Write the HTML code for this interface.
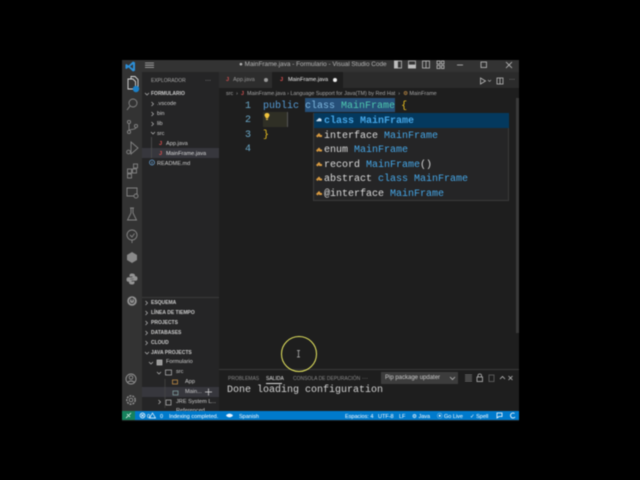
<!DOCTYPE html>
<html><head><meta charset="utf-8">
<style>
html,body{margin:0;padding:0;background:#000;width:640px;height:480px;overflow:hidden}
#w{position:absolute;left:0;top:0;width:640px;height:480px;filter:blur(.45px);font-family:"Liberation Sans",sans-serif;overflow:hidden}
.r{position:absolute}
.t{position:absolute;white-space:nowrap;line-height:10px;color:#ccc}
.m{font-family:"Liberation Mono",monospace;font-size:10px;line-height:14px;letter-spacing:0}
.h{font-size:5px;font-weight:bold;color:#ccc;letter-spacing:0}
.f{font-size:5.6px;color:#ccc}
.s{font-size:5.5px;line-height:9px;color:#fff;top:412.500px}
svg{position:absolute;overflow:visible}
.b{color:#45a6e6}
.c{color:#dcdcdc}
</style></head><body><div id="w">
<div class="r" style="left:122px;top:60px;width:397px;height:361px;background:#1e1e1e"></div>
<div class="r" style="left:122px;top:60px;width:397px;height:12px;background:#333"></div>
<div class="r" style="left:122px;top:72px;width:20px;height:339px;background:#333"></div>
<div class="r" style="left:142px;top:72px;width:77px;height:339px;background:#252526"></div>
<div class="r" style="left:219px;top:72px;width:300px;height:16px;background:#2b2b2b"></div>
<div class="r" style="left:219px;top:72px;width:53px;height:16px;background:#2d2d2d"></div>
<div class="r" style="left:272px;top:72px;width:71px;height:16px;background:#1e1e1e"></div>

<!-- title bar -->
<svg style="left:125px;top:61px" width="11" height="11" viewBox="0 0 11 11"><path d="M8 .5L3.5 4.6 1.4 3 .5 3.5V7.5L1.4 8 3.5 6.4 8 10.5 10 9.6V1.4Z" fill="#2c8fd8"/><path d="M8 3.3L5 5.5 8 7.7Z" fill="#333"/></svg>
<svg style="left:145px;top:62px" width="10" height="7"><path d="M0 1H9M0 3.2H9M0 5.4H9" stroke="#b5b5b5" stroke-width=".8"/></svg>
<div class="t" style="left:239px;top:60px;font-size:6.4px;color:#b5b5b5">● MainFrame.java - Formulario - Visual Studio Code</div>
<svg style="left:394px;top:60px" width="125" height="12" fill="none" stroke="#bdbdbd" stroke-width=".8">
<rect x="0.5" y="1" width="7" height="7"/><rect x="0.5" y="1" width="3" height="7" fill="#bdbdbd"/>
<rect x="14.5" y="1" width="7" height="7"/><rect x="14.5" y="5" width="7" height="3" fill="#bdbdbd"/>
<rect x="28.5" y="1" width="7" height="7"/><path d="M32 1V8"/>
<rect x="43" y="1" width="3" height="3"/><rect x="47.5" y="1" width="2.5" height="3"/><rect x="43" y="5.5" width="3" height="3"/><rect x="47.5" y="5.5" width="2.5" height="3"/>
<path d="M63 5H69"/><rect x="87" y="2" width="5.5" height="5.5"/><path d="M112 2L118 8M118 2L112 8"/>
</svg>

<!-- activity bar -->
<svg style="left:122px;top:72px" width="20" height="240" fill="none" stroke="#858585" stroke-width=".9">
<path d="M6 7H11L13.5 9.5V17H6Z M9 7V4.5H13L16 7.5V15H13.5" stroke="#d8d8d8"/>
<circle cx="14" cy="17" r="3.2" fill="#1b80c8" stroke="none"/>
<circle cx="11" cy="31" r="4"/><path d="M8 34L5 38"/>
<circle cx="7" cy="50" r="1.6"/><circle cx="7" cy="60" r="1.6"/><circle cx="14" cy="54" r="1.6"/><path d="M7 51.5V58.5M14 55.5C14 58 8 57 7 58.5"/>
<path d="M9 70L16 76 9 82Z"/><circle cx="6.5" cy="80" r="1.8"/>
<rect x="5.5" y="97" width="4" height="4"/><rect x="10.5" y="97" width="4" height="4"/><rect x="5.5" y="102" width="4" height="4"/><rect x="11.5" y="92" width="4" height="4"/>
<path d="M5 116H15V124H5Z"/><circle cx="14" cy="124" r="2" fill="#333"/>
<path d="M8 136H12M9 136V141L5.5 148H14.5L11 141V136"/>
<circle cx="10" cy="163" r="5"/><path d="M10 168V171M8 163L10 165 12.5 161.500"/>
<path d="M10 180L15 183V188L10 191 5 188V183Z" fill="#8a8a8a" stroke="none"/>
<path d="M10 201.500C8 201.500 7.500 202.500 7.500 203.500V204.500H10.500V205.200H6.500C5 205.200 4.500 206.200 4.500 207.500 4.500 208.800 5 209.800 6.500 209.800H7.500V208.500C7.500 207.500 8.300 206.800 9.300 206.800H11.500C12.300 206.800 13 206.200 13 205.300V203.500C13 202.300 12 201.500 10 201.500Z" fill="#949494" stroke="none"/>
<path d="M10 212.500C12 212.500 12.500 211.500 12.500 210.500V209.500H9.500V208.800H13.500C15 208.800 15.500 207.800 15.500 206.500 15.500 205.200 15 204.200 13.500 204.200H12.500V205.500C12.500 206.500 11.700 207.200 10.700 207.200H8.500C7.700 207.200 7 207.800 7 208.700V210.500C7 211.700 8 212.500 10 212.500Z" fill="#949494" stroke="none"/>
<circle cx="10" cy="229" r="4.800" fill="#949494" stroke="none"/><circle cx="10" cy="229" r="2.500" stroke="#333"/><path d="M10 225.500V229" stroke="#333"/>
</svg>
<svg style="left:122px;top:370px" width="20" height="40" fill="none" stroke="#949494" stroke-width=".9">
<circle cx="9" cy="9" r="5"/><circle cx="9" cy="7.500" r="1.800"/><path d="M5.500 12.500C7 10.500 11 10.500 12.500 12.500"/>
<circle cx="9" cy="30" r="1.800"/><circle cx="9" cy="30" r="4.200" stroke-dasharray="2 1" stroke-width="1.400"/>
</svg>

<!-- sidebar -->
<div class="t h" style="left:151px;top:76px;font-weight:normal;color:#aaa">EXPLORADOR</div>
<div class="t" style="left:205px;top:76px;font-size:6px;color:#bbb">···</div>
<div class="r" style="left:142px;top:148px;width:77px;height:10px;background:#37373d"></div>
<div class="r" style="left:151px;top:137px;width:1px;height:21px;background:#484848"></div>
<svg style="left:142px;top:89px" width="20" height="80" fill="none" stroke="#bbb" stroke-width=".7">
<path d="M3 4L5 6 7 4"/><path d="M9.500 13L11.500 15 9.500 17"/><path d="M9.500 23L11.500 25 9.500 27"/><path d="M9.500 33L11.500 35 9.500 37"/><path d="M9 43L11 45 13 43"/>
</svg>
<div class="t h" style="left:151px;top:88.500px">FORMULARIO</div>
<div class="t f" style="left:157px;top:98.500px">.vscode</div>
<div class="t f" style="left:157px;top:108.500px">bin</div>
<div class="t f" style="left:157px;top:118.500px">lib</div>
<div class="t f" style="left:157px;top:128.500px">src</div>
<div class="t f" style="left:159px;top:138.500px;color:#e05050;font-weight:bold">J</div>
<div class="t f" style="left:166px;top:138.500px">App.java</div>
<div class="t f" style="left:159px;top:148.500px;color:#e05050;font-weight:bold">J</div>
<div class="t f" style="left:166px;top:148.500px;color:#ddd">MainFrame.java</div>
<svg style="left:149px;top:159px" width="7" height="7" fill="none" stroke="#6aa5d8" stroke-width=".7"><circle cx="3" cy="3.500" r="2.500"/><path d="M3 2.500V5"/></svg>
<div class="t f" style="left:157px;top:158.500px">README.md</div>

<div class="r" style="left:142px;top:297px;width:77px;height:1px;background:#3a3a3a"></div>
<svg style="left:142px;top:299px" width="20" height="60" fill="none" stroke="#bbb" stroke-width=".7">
<path d="M3.500 2L5.500 4 3.500 6"/><path d="M3.500 12L5.500 14 3.500 16"/><path d="M3.500 22L5.500 24 3.500 26"/><path d="M3.500 32L5.500 34 3.500 36"/><path d="M3.500 42L5.500 44 3.500 46"/><path d="M3 53L5 55 7 53"/>
</svg>
<div class="t h" style="left:151px;top:298px">ESQUEMA</div>
<div class="t h" style="left:151px;top:308px">LÍNEA DE TIEMPO</div>
<div class="t h" style="left:151px;top:318px">PROJECTS</div>
<div class="t h" style="left:151px;top:328px">DATABASES</div>
<div class="t h" style="left:151px;top:338px">CLOUD</div>
<div class="t h" style="left:151px;top:348px">JAVA PROJECTS</div>
<div class="r" style="left:142px;top:387px;width:77px;height:10px;background:#37373d"></div>
<svg style="left:142px;top:356px" width="77" height="55" fill="none" stroke="#bbb" stroke-width=".7">
<path d="M7 6L9 8 11 6"/><rect x="15" y="4" width="5" height="5" fill="#999"/>
<path d="M15 16L17 18 19 16"/><rect x="23.500" y="14" width="6" height="5"/>
<path d="M16.500 44L18.500 46 16.500 48"/><rect x="24" y="44" width="5" height="5"/>
<path d="M23 23V52" stroke="#484848"/>
<rect x="30.500" y="24" width="5" height="4" stroke="#d49a4a"/><rect x="31" y="35" width="5" height="4" stroke="#8aa"/>
<path d="M63 36H70M66.500 32.500V39.500" stroke="#ddd"/>
</svg>
<div class="t f" style="left:166px;top:356.500px">Formulario</div>
<div class="t f" style="left:176px;top:366.500px">src</div>
<div class="t f" style="left:185px;top:376.500px">App</div>
<div class="t f" style="left:185px;top:387px">Main...</div>
<div class="t f" style="left:176px;top:397px">JRE System L...</div>
<div class="t f" style="left:176px;top:406px">Referenced</div>
<div class="r" style="left:122px;top:411px;width:397px;height:9px;background:#007acc;z-index:0"></div>

<!-- tabs -->
<div class="t f" style="left:226px;top:75px;color:#d05050;font-weight:bold">J</div>
<div class="t f" style="left:233px;top:75px;color:#999">App.java</div>
<div class="r" style="left:264px;top:78px;width:4px;height:4px;border-radius:2px;background:#999"></div>
<div class="t f" style="left:280px;top:75px;color:#e05050;font-weight:bold">J</div>
<div class="t f" style="left:288px;top:75px;color:#eee">MainFrame.java</div>
<div class="r" style="left:333px;top:78px;width:4px;height:4px;border-radius:2px;background:#eee"></div>
<svg style="left:479px;top:77px" width="40" height="9" fill="none" stroke="#bbb" stroke-width=".8"><path d="M1.500 1L6.500 4 1.500 7Z"/><path d="M9 3L10.500 4.500 12 3" stroke-width=".6"/><rect x="18" y="1" width="6" height="6"/><path d="M21 1V7"/></svg>
<div class="t" style="left:509px;top:75px;font-size:6px;color:#bbb">···</div>

<!-- breadcrumb -->
<div class="t" style="left:226px;top:88.500px;font-size:5.400px;color:#a8a8a8">src &nbsp;›&nbsp; <span style="color:#d05050;font-weight:bold">J</span>&nbsp; MainFrame.java › Language Support for Java(TM) by Red Hat &nbsp;›&nbsp; <span style="color:#d49a4a">⚙</span> MainFrame</div>

<!-- editor -->
<div class="r" style="left:305px;top:98px;width:90px;height:14px;background:#264f78"></div>
<div class="r" style="left:263px;top:112px;width:24px;height:15px;background:#2f2f25;border-right:1px solid #555"></div>
<div class="t m" style="left:245px;top:99.500px;color:#6aa8c8;line-height:14.500px">1<br>2<br>3<br>4</div>
<div class="t m" style="left:263px;top:99.500px;color:#569cd6;line-height:14.500px">public <span style="color:#7fb8e0">class</span> <span style="color:#4ec9b0">MainFrame</span> <span style="color:#f0c420">{</span><br><br><span style="color:#f0c420">}</span></div>
<svg style="left:263px;top:112px" width="8" height="9"><path d="M4 1C2.200 1 1.500 2.200 1.500 3.300 1.500 4.500 2.800 5 2.800 6.200H5.200C5.200 5 6.500 4.500 6.500 3.300 6.500 2.200 5.800 1 4 1Z" fill="#f0c33c"/><rect x="3" y="6.800" width="2" height="1.200" fill="#d0b050"/></svg>
<div class="r" style="left:516px;top:98px;width:3px;height:235px;background:#3a3a3a"></div>

<!-- suggest -->
<div class="r" style="left:313px;top:113px;width:196px;height:88px;background:#252526;border:1px solid #3a3a3a;box-sizing:border-box"></div>
<div class="r" style="left:314px;top:113px;width:195px;height:15px;background:#04395e"></div>
<svg style="left:315px;top:115px" width="8" height="88">
<g fill="#c9dff0"><path d="M1 6L4 3 6 3.500 3 6.500Z"/><rect x="3.500" y="4" width="3" height="2.300"/></g>
<g fill="#d89a40" transform="translate(0 15)"><path d="M1 6L4 3 5.500 4.500 2.500 7.500Z"/><rect x="4" y="5" width="3" height="2"/></g>
<g fill="#d89a40" transform="translate(0 29.500)"><path d="M1 6L4 3 5.500 4.500 2.500 7.500Z"/><rect x="4" y="5" width="3" height="2"/></g>
<g fill="#d89a40" transform="translate(0 44)"><path d="M1 6L4 3 5.500 4.500 2.500 7.500Z"/><rect x="4" y="5" width="3" height="2"/></g>
<g fill="#d89a40" transform="translate(0 58.500)"><path d="M1 6L4 3 5.500 4.500 2.500 7.500Z"/><rect x="4" y="5" width="3" height="2"/></g>
<g fill="#d89a40" transform="translate(0 73)"><path d="M1 6L4 3 5.500 4.500 2.500 7.500Z"/><rect x="4" y="5" width="3" height="2"/></g>
</svg>
<div class="t m c" style="left:324px;top:115px;line-height:14.500px"><span class="b" style="font-weight:bold">class MainFrame</span><br>interface <span class="b">MainFrame</span><br>enum <span class="b">MainFrame</span><br>record <span class="b">MainFrame</span>()<br>abstract <span class="b">class MainFrame</span><br>@interface <span class="b">MainFrame</span></div>

<!-- panel -->
<div class="r" style="left:219px;top:369px;width:300px;height:42px;background:#1e1e1e;border-top:1px solid #3a3a3a;box-sizing:border-box"></div>
<div class="t" style="left:228px;top:373.500px;font-size:5px;color:#8a8a8a">PROBLEMAS</div>
<div class="t" style="left:266px;top:373.500px;font-size:5px;color:#e5e5e5">SALIDA</div>
<div class="r" style="left:266px;top:383px;width:16px;height:1px;background:#ddd"></div>
<div class="t" style="left:293px;top:373.500px;font-size:5px;color:#8a8a8a">CONSOLA DE DEPURACIÓN</div>
<div class="t" style="left:362px;top:373.500px;font-size:6px;color:#999">···</div>
<div class="r" style="left:381px;top:372px;width:77px;height:12px;background:#3c3c3c"></div>
<div class="t" style="left:385px;top:373px;font-size:6px;color:#ccc">Pip package updater</div>
<svg style="left:448px;top:372px" width="70" height="12" fill="none" stroke="#bbb" stroke-width=".8">
<path d="M2 5L4.500 7.500 7 5"/><path d="M17 3H24M17 5H24M17 7H24M17 9H24" stroke="#888"/>
<rect x="29" y="5" width="5.500" height="4.500"/><path d="M30 5V3.500C30 1.500 33.500 1.500 33.500 3.500V5"/>
<rect x="41" y="3" width="5" height="6.500" stroke="#666"/><path d="M60 7L62.500 4.500 65 7" transform="translate(-8 0)"/><path d="M60.500 4L64.500 8M64.500 4L60.500 8"/>
</svg>
<div class="t m" style="left:227px;top:383.500px;color:#d4d4d4">Done loading configuration</div>

<!-- status bar -->
<div class="r" style="left:122px;top:411px;width:13px;height:9px;background:#16825d"></div>
<svg style="left:125px;top:412px" width="7" height="7" fill="none" stroke="#fff" stroke-width=".7"><path d="M1 6L3 4M4 3L6 1M2 2L5 5"/></svg>
<svg style="left:139px;top:412px" width="20" height="7" fill="none" stroke="#fff" stroke-width=".7"><circle cx="3.500" cy="3.500" r="2.500"/><path d="M2.200 2.200L4.800 4.800M4.800 2.200L2.200 4.800"/><path d="M13.500 1L16.500 6H10.500Z"/></svg>
<div class="t s" style="left:147px">0</div>
<div class="t s" style="left:160px">0</div>
<div class="t s" style="left:169px">Indexing completed.</div>
<svg style="left:226px;top:413px" width="7" height="5"><path d="M0 2.500C2 0 5 0 7 2.500 5 5 2 5 0 2.500Z" fill="#e8f4ff"/></svg>
<div class="t s" style="left:239px">Spanish</div>
<div class="t s" style="left:345px">Espacios: 4</div>
<div class="t s" style="left:378px">UTF-8</div>
<div class="t s" style="left:399px">LF</div>
<div class="t s" style="left:412px">⚙ Java</div>
<div class="t s" style="left:437px">⦿ Go Live</div>
<div class="t s" style="left:470px">✓ Spell</div>
<svg style="left:496px;top:412px" width="22" height="7" fill="none" stroke="#fff" stroke-width=".8"><path d="M1 1H6V4.500H3L1 6Z"/><path d="M18.500 1.500A2.500 2.500 0 1 0 19 5"/></svg>

<!-- cursor highlight -->
<div class="r" style="left:281px;top:336px;width:36px;height:36px;border:1.500px solid #e8e860;border-radius:50%;box-sizing:border-box"></div>
<svg style="left:296px;top:350px" width="5" height="8" fill="none" stroke="#bbb" stroke-width=".7"><path d="M1 .5H4M2.500 .5V7M1 7H4"/></svg>
</div></body></html>
